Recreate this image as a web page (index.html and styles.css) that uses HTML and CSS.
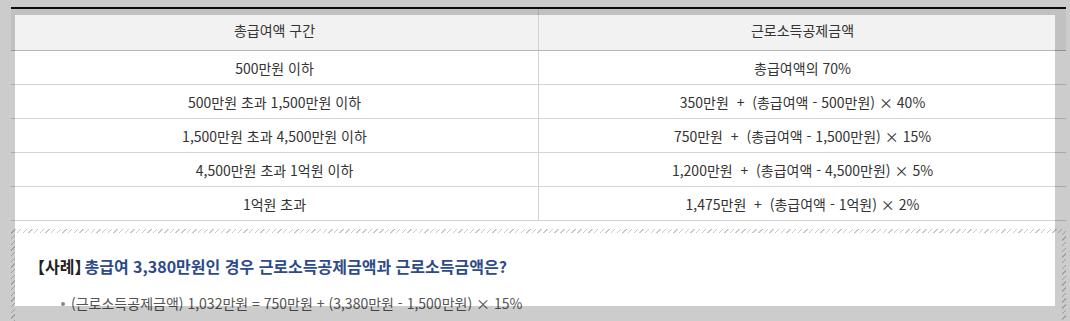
FILE: index.html
```html
<!DOCTYPE html>
<html lang="ko">
<head>
<meta charset="utf-8">
<link rel="stylesheet" href="styles.css">
</head>
<body>
<div class="wrap">
  <table class="tbl">
    <thead>
      <tr><th>총급여액 구간</th><th>근로소득공제금액</th></tr>
    </thead>
    <tbody>
      <tr><td>500만원 이하</td><td>총급여액의 70%</td></tr>
      <tr><td>500만원 초과 1,500만원 이하</td><td>350만원 &nbsp;+&nbsp; (총급여액 - 500만원) × 40%</td></tr>
      <tr><td>1,500만원 초과 4,500만원 이하</td><td>750만원 &nbsp;+&nbsp; (총급여액 - 1,500만원) × 15%</td></tr>
      <tr><td>4,500만원 초과 1억원 이하</td><td>1,200만원 &nbsp;+&nbsp; (총급여액 - 4,500만원) × 5%</td></tr>
      <tr><td>1억원 초과</td><td>1,475만원 &nbsp;+&nbsp; (총급여액 - 1억원) × 2%</td></tr>
    </tbody>
  </table>
  <div class="case">
    <div class="case-inner">
      <p class="case-title"><span class="tag">【사례】</span>총급여 3,380만원인 경우 근로소득공제금액과 근로소득금액은?</p>
      <ul class="case-list">
        <li>(근로소득공제금액) 1,032만원 = 750만원 + (3,380만원 - 1,500만원) × 15%</li>
      </ul>
    </div>
  </div>
</div>
<div class="spot"></div>
</body>
</html>
```
FILE: styles.css
```css
html, body {
  margin: 0;
  padding: 0;
  background: #fff;
  overflow: hidden;
}
body {
  width: 1070px;
  height: 321px;
  font-family: "Noto Sans CJK KR", "Noto Sans", sans-serif;
  color: #333;
}
.wrap {
  padding: 7px 4px 0 11px;
}
.tbl {
  width: 100%;
  border-collapse: collapse;
  table-layout: fixed;
  border-top: 2px solid #111;
  font-size: 14px;
}
.tbl th, .tbl td {
  text-align: center;
  font-weight: normal;
  padding: 0;
  line-height: 18px;
}
.tbl th {
  background: #f2f2f2;
  height: 41px;
  border-bottom: 1px solid #b4b4b4;
}
.tbl td {
  height: 33px;
  border-bottom: 1px solid #d4d4d4;
}
.tbl th + th, .tbl td + td {
  border-left: 1px solid #d4d4d4;
}
.case {
  margin-top: 8px;
  padding: 4px 4px 0 4px;
  background: repeating-linear-gradient(-45deg, #c8c8c8 0 1px, #fff 1px 4px);
}
.case-inner {
  background: #fff;
  padding: 24px 22px 10px 22px;
}
.case-title {
  margin: 0;
  font-size: 16px;
  font-weight: bold;
  line-height: 18px;
  color: #2d4a8a;
}
.case-title .tag {
  color: #222;
  font-feature-settings: "halt";
  margin-right: 2px;
}
.case-list {
  margin: 19px 0 0 0;
  padding: 0 0 0 34px;
  list-style: none;
  font-size: 14px;
  line-height: 18px;
  color: #555;
}
.case-list li {
  position: relative;
}
.case-list li::before {
  content: "";
  position: absolute;
  left: -10px;
  top: 8px;
  width: 4px;
  height: 4px;
  border-radius: 50%;
  background: #888;
}
.spot {
  position: absolute;
  left: 15px;
  top: 15px;
  width: 1040px;
  height: 291px;
  box-shadow: 0 0 0 3000px rgba(0, 0, 0, 0.2);
  pointer-events: none;
}
```
